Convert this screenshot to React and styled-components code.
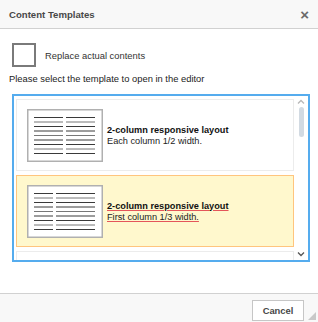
import React from "react";
import styled, { createGlobalStyle } from "styled-components";

const Global = createGlobalStyle`
  html, body { margin: 0; padding: 0; background: #fff; }
  body { font-family: "Liberation Sans", Arial, sans-serif; }
`;

const Dialog = styled.div`
  width: 318px;
  height: 322px;
  display: flex;
  flex-direction: column;
  background: #fff;
  color: #333;
  font-size: 9.4px;
  overflow: hidden;
`;

const Header = styled.div`
  height: 28px;
  flex: none;
  display: flex;
  align-items: center;
  justify-content: space-between;
  padding: 0 9px;
  background: #f8f8f8;
  border-bottom: 1px solid #d1d1d1;
`;

const Title = styled.div`
  font-weight: bold;
  font-size: 9.6px;
  color: #484848;
`;

const Close = styled.div`
  font-size: 15px;
  font-weight: bold;
  color: #6a6a6a;
  line-height: 1;
  margin-top: 1px;
`;

const Body = styled.div`
  flex: 1;
  padding: 14px 8px 0 12px;
  display: flex;
  flex-direction: column;
`;

const CheckRow = styled.label`
  display: flex;
  align-items: center;
  gap: 9px;
  height: 24px;
`;

const CheckBox = styled.span`
  width: 20px;
  height: 20px;
  border: 2px solid #7a7a7a;
  background: #fff;
  flex: none;
`;

const Instruction = styled.div`
  margin: 5px 0 0 -3px;
  line-height: 14px;
  color: #222;
`;

const ListFrame = styled.div`
  margin-top: 8px;
  height: 164px;
  border: 2px solid #55acee;
  display: flex;
  overflow: hidden;
`;

const List = styled.div`
  flex: 1;
  padding: 3px 0 0 2px;
  display: flex;
  flex-direction: column;
  gap: 4px;
  overflow: hidden;
`;

const Item = styled.div`
  flex: none;
  height: 70px;
  display: flex;
  align-items: center;
  gap: 4px;
  padding-left: 10px;
  border: 1px solid ${(p) => (p.$selected ? "#ffc57e" : "#ececec")};
  background: ${(p) => (p.$selected ? "#fff8cd" : "#fff")};
`;

const Thumb = styled.svg`
  flex: none;
  display: block;
`;

const Info = styled.div`
  display: flex;
  flex-direction: column;
  font-size: 9.2px;
  line-height: 11px;
  color: #222;
  margin-top: 1px;
  text-decoration: ${(p) => (p.$selected ? "underline" : "none")};
  text-decoration-color: #e4555a;
`;

const Name = styled.span`
  font-weight: bold;
  color: #111;
`;

const Scroll = styled.div`
  width: 14px;
  flex: none;
  display: flex;
  flex-direction: column;
  align-items: center;
`;

const Arrow = styled.svg`
  display: block;
  margin-top: ${(p) => (p.$down ? "auto" : "3px")};
  margin-bottom: ${(p) => (p.$down ? "3px" : "0")};
`;

const ThumbBar = styled.div`
  width: 5px;
  height: 30px;
  margin-top: 2px;
  border-radius: 3px;
  background: #d2dae2;
`;

const Footer = styled.div`
  height: 28px;
  flex: none;
  display: flex;
  align-items: center;
  justify-content: flex-end;
  padding-right: 14px;
  background: #f8f8f8;
  border-top: 1px solid #d1d1d1;
  position: relative;
`;

const Button = styled.button`
  width: 52px;
  height: 21px;
  margin-top: 4px;
  border: 1px solid #c6c6c6;
  background: #fff;
  font-family: "Liberation Sans", Arial, sans-serif;
  font-size: 9.4px;
  font-weight: bold;
  color: #474747;
  padding: 0;
`;

const Grip = styled.svg`
  position: absolute;
  right: 2px;
  bottom: 2px;
`;

function Thumbnail({ split }) {
  const rows = Array.from({ length: 9 }, (_, i) => 8 + i * 4.5);
  const leftEnd = split === "third" ? 26 : 36;
  const rightStart = split === "third" ? 29 : 39;
  return (
    <Thumb width="76" height="53" viewBox="0 0 76 53">
      <rect x="0.75" y="0.75" width="74.5" height="51.5" fill="#fff" stroke="#b0b0b0" strokeWidth="1.5" />
      {rows.map((y, i) => (
        <g key={i} stroke={i % 3 === 1 ? "#777" : "#3a3a3a"} strokeWidth="1">
          <line x1="7" x2={leftEnd} y1={y + 0.5} y2={y + 0.5} />
          <line x1={rightStart} x2="68" y1={y + 0.5} y2={y + 0.5} />
        </g>
      ))}
    </Thumb>
  );
}

const templates = [
  { name: "2-column responsive layout", desc: "Each column 1/2 width.", split: "half" },
  { name: "2-column responsive layout", desc: "First column 1/3 width.", split: "third", selected: true },
];

export default function App() {
  return (
    <>
      <Global />
      <Dialog>
        <Header>
          <Title>Content Templates</Title>
          <Close>×</Close>
        </Header>
        <Body>
          <CheckRow>
            <CheckBox />
            <span>Replace actual contents</span>
          </CheckRow>
          <Instruction>Please select the template to open in the editor</Instruction>
          <ListFrame>
            <List>
              {templates.map((t, i) => (
                <Item key={i} $selected={t.selected}>
                  <Thumbnail split={t.split} />
                  <Info $selected={t.selected}>
                    <Name>{t.name}</Name>
                    <span>{t.desc}</span>
                  </Info>
                </Item>
              ))}
              <Item />
            </List>
            <Scroll>
              <Arrow width="8" height="6" viewBox="0 0 8 6">
                <path d="M1 4.5 L4 1.5 L7 4.5" fill="none" stroke="#b8b8b8" strokeWidth="1.3" />
              </Arrow>
              <ThumbBar />
              <Arrow $down width="8" height="6" viewBox="0 0 8 6">
                <path d="M1 1.5 L4 4.5 L7 1.5" fill="none" stroke="#555" strokeWidth="1.3" />
              </Arrow>
            </Scroll>
          </ListFrame>
        </Body>
        <Footer>
          <Button>Cancel</Button>
          <Grip width="8" height="8" viewBox="0 0 8 8">
            <path d="M8 0 L8 8 L0 8 Z" fill="#c8c8c8" />
          </Grip>
        </Footer>
      </Dialog>
    </>
  );
}
